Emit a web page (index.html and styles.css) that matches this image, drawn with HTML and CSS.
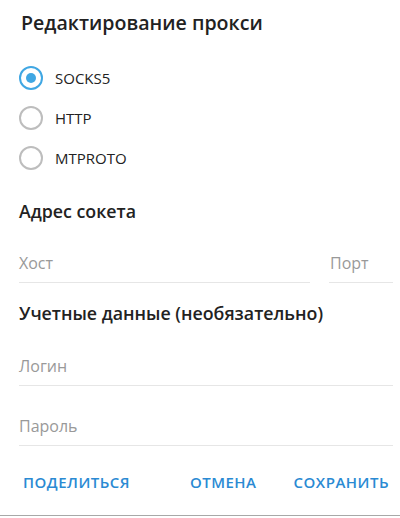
FILE: index.html
```html
<!DOCTYPE html>
<html lang="ru">
<head>
<meta charset="utf-8">
<title>Редактирование прокси</title>
<link rel="stylesheet" href="styles.css">
</head>
<body>
<div class="box">
  <h1 class="title">Редактирование прокси</h1>
  <div class="radios">
    <div class="radio checked"><span class="circle"><span class="dot"></span></span><span class="label">SOCKS5</span></div>
    <div class="radio"><span class="circle"></span><span class="label">HTTP</span></div>
    <div class="radio"><span class="circle"></span><span class="label">MTPROTO</span></div>
  </div>
  <h2 class="section sec1">Адрес сокета</h2>
  <div class="row first">
    <div class="field host">Хост</div>
    <div class="field port">Порт</div>
  </div>
  <h2 class="section sec2">Учетные данные (необязательно)</h2>
  <div class="field login">Логин</div>
  <div class="field pass">Пароль</div>
  <div class="buttons">
    <span class="btn">ПОДЕЛИТЬСЯ</span>
    <span class="right">
      <span class="btn">ОТМЕНА</span>
      <span class="btn">СОХРАНИТЬ</span>
    </span>
  </div>
  <div class="footer"></div>
</div>
</body>
</html>
```
FILE: styles.css
```css
html, body {
  margin: 0;
  padding: 0;
  background: #fff;
}
body {
  font-family: "Open Sans", "Noto Sans", sans-serif;
  color: #222;
  width: 400px;
  height: 518px;
  overflow: hidden;
}
.box {
  padding: 11px 7px 0 19px;
  display: flex;
  flex-direction: column;
}
.title {
  margin: 0;
  font-size: 19.6px;
  font-weight: 600;
  line-height: 24px;
  padding-left: 2px;
  color: #222;
}
.radios {
  margin-top: 23px;
  display: flex;
  flex-direction: column;
}
.radio {
  height: 40px;
  display: flex;
  align-items: center;
}
.circle {
  width: 20px;
  height: 20px;
  border: 2px solid #bdbdbd;
  border-radius: 50%;
  display: flex;
  align-items: center;
  justify-content: center;
  flex: none;
}
.radio.checked .circle {
  border-color: #40a7e3;
}
.dot {
  width: 10px;
  height: 10px;
  border-radius: 50%;
  background: #40a7e3;
}
.label {
  margin-left: 12px;
  font-size: 15px;
  line-height: 20px;
  color: #222;
}
.section {
  margin: 0;
  font-size: 17.8px;
  font-weight: 600;
  line-height: 24px;
  color: #222;
}
.sec1 { margin-top: 21px; }
.sec2 { margin-top: 18px; }
.row {
  display: flex;
  gap: 19px;
}
.row.first { margin-top: 30px; }
.field {
  font-size: 16px;
  line-height: 20px;
  color: #999;
  padding-bottom: 9px;
  border-bottom: 1px solid #e6e6e6;
}
.host { flex: 1; }
.port { width: 63px; padding-left: 1px; }
.login { margin-top: 31px; }
.pass { margin-top: 30px; }
.buttons {
  margin-top: 26px;
  display: flex;
  justify-content: space-between;
  padding: 0 4px 0 4px;
}
.right {
  display: flex;
  gap: 37px;
}
.btn {
  font-size: 15px;
  font-weight: 600;
  line-height: 20px;
  letter-spacing: 0.5px;
  color: #2a8ad3;
}
.footer {
  margin: 23px -7px 0 -19px;
  border-top: 1px solid #a8a8a8;
  height: 4px;
}
```
